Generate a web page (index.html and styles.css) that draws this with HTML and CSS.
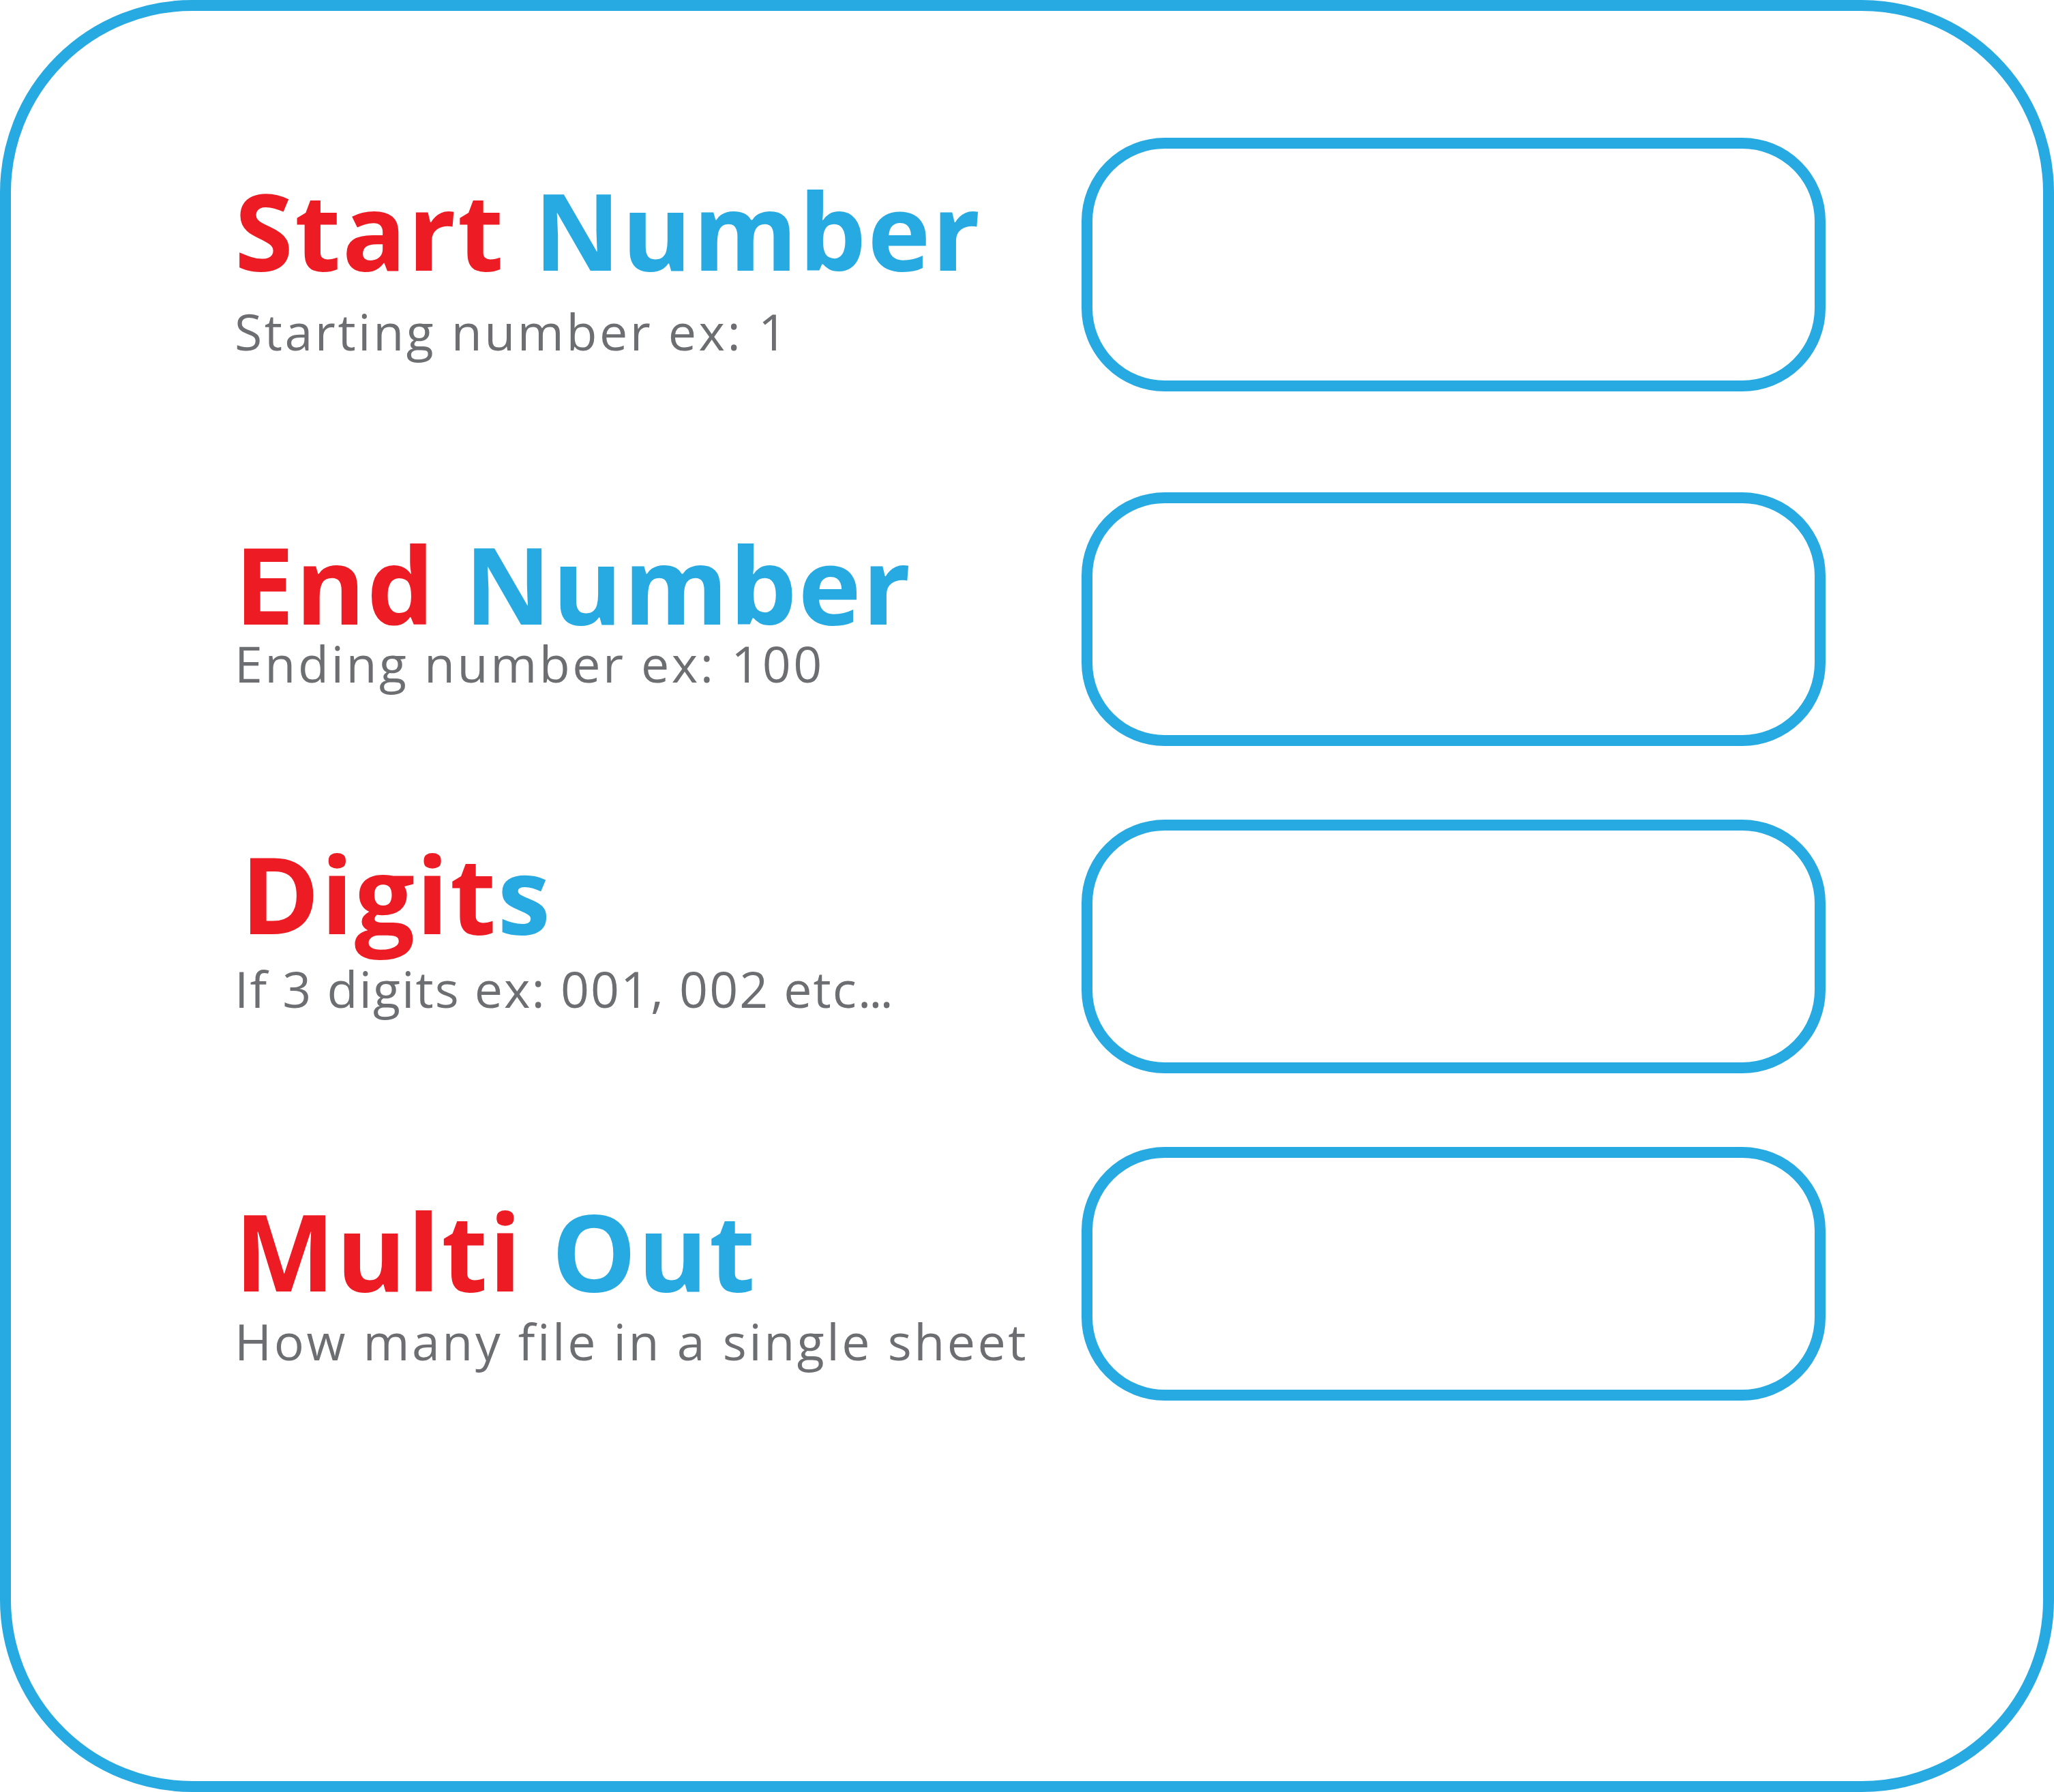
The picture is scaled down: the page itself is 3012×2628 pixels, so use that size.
FILE: index.html
```html
<!DOCTYPE html>
<html lang="en">
<head>
<meta charset="utf-8">
<title>Number settings</title>
<link rel="stylesheet" href="styles.css">
</head>
<body>
<main class="frame">
  <div class="field field--start">
    <div class="label">
      <h2 class="title"><span class="red">Start</span> <span class="blue">Number</span></h2>
      <p class="hint">Starting number ex: 1</p>
    </div>
    <div class="box"></div>
  </div>
  <div class="field field--end">
    <div class="label">
      <h2 class="title"><span class="red">End</span> <span class="blue">Number</span></h2>
      <p class="hint">Ending number ex: 100</p>
    </div>
    <div class="box"></div>
  </div>
  <div class="field field--digits">
    <div class="label">
      <h2 class="title"><span class="red">Digit</span><span class="blue">s</span></h2>
      <p class="hint">If 3 digits ex: 001, 002 etc<span class="dots">...</span></p>
    </div>
    <div class="box"></div>
  </div>
  <div class="field field--multi">
    <div class="label">
      <h2 class="title"><span class="red">Multi</span> <span class="blue">Out</span></h2>
      <p class="hint">How many file in a single sheet</p>
    </div>
    <div class="box"></div>
  </div>
</main>
</body>
</html>
```

FILE: styles.css
```css
html, body {
  margin: 0;
  padding: 0;
  background: #ffffff;
}

.frame {
  box-sizing: border-box;
  width: 3012px;
  height: 2628px;
  border: 16px solid #27aae1;
  border-radius: 282px;
  padding: 186px 319px 0 326px;
  display: flex;
  flex-direction: column;
  gap: 108px;
}

.field {
  display: grid;
  grid-template-columns: 1244px 1091px;
  height: 372px;
}

.field--start { margin-bottom: 40px; }

.label {
  display: flex;
  flex-direction: column;
  padding-left: 2px;
}

.title {
  margin: 0;
  font-family: "Open Sans", "Liberation Sans", sans-serif;
  font-weight: 700;
  font-size: 156px;
  line-height: 156px;
  letter-spacing: 2px;
  white-space: nowrap;
}

.red { color: #ed1c24; }
.blue { color: #27aae1; }

.hint {
  margin: 0;
  font-family: "Open Sans", "Liberation Sans", sans-serif;
  font-weight: 400;
  font-size: 73.5px;
  line-height: 73.5px;
  letter-spacing: 3.5px;
  color: #6d6e71;
  white-space: nowrap;
}

.dots { letter-spacing: -3px; }

.field--start .title { margin-top: 57px; }
.field--start .hint { margin-top: 34px; }

.field--end .title { margin-top: 56px; }
.field--end .hint { margin-top: 2px; }

.field--digits .title { margin-top: 30px; padding-left: 9px; }
.field--digits .hint { margin-top: 25px; letter-spacing: 2px; }
.field--digits .hint .dots { letter-spacing: -3px; }

.field--multi .title { margin-top: 74px; }
.field--multi .hint { margin-top: 18px; }

.box {
  box-sizing: border-box;
  height: 372px;
  border: 16px solid #27aae1;
  border-radius: 122px;
}
```
